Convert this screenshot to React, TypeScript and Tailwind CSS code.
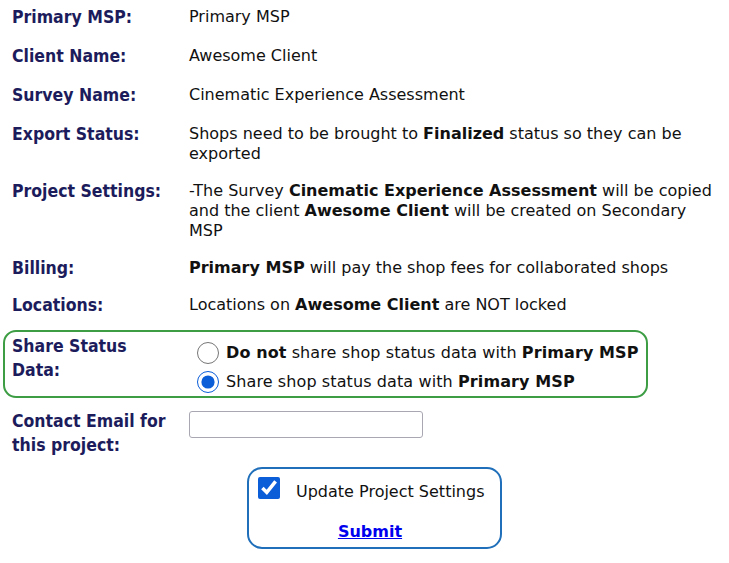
import React from 'react'

const labelCls =
  "font-['DejaVu_Sans_Condensed','Open_Sans',sans-serif] font-bold text-[17.5px] leading-6 text-[#1c1c5c]"

function Row({ label, children }: { label: string; children?: React.ReactNode }) {
  return (
    <div className="grid grid-cols-[177px_1fr] items-start">
      <div className={labelCls}>{label}</div>
      <div className="pt-[2px] text-[16px] leading-5 text-[#111]">{children}</div>
    </div>
  )
}

export default function App() {
  return (
    <div className="min-h-screen w-[729px] bg-white font-['DejaVu_Sans',Verdana,sans-serif] text-[#111]">
      <div className="flex flex-col gap-[15px] pl-3 pt-[5px]">
        <Row label="Primary MSP:">Primary MSP</Row>
        <Row label="Client Name:">Awesome Client</Row>
        <Row label="Survey Name:">Cinematic Experience Assessment</Row>
        <Row label="Export Status:">
          Shops need to be brought to <b>Finalized</b> status so they can be
          <br />
          exported
        </Row>
        <Row label="Project Settings:">
          -The Survey <b>Cinematic Experience Assessment</b> will be copied
          <br />
          and the client <b>Awesome Client</b> will be created on Secondary
          <br />
          MSP
        </Row>
        <Row label="Billing:">
          <b>Primary MSP</b> will pay the shop fees for collaborated shops
        </Row>
        <div className="-mt-[2px]">
          <Row label="Locations:">
            Locations on <b>Awesome Client</b> are NOT locked
          </Row>
        </div>
      </div>

      <div className="ml-[3px] mt-[13px] grid w-[645px] grid-cols-[177px_1fr] items-start rounded-[13px] border-2 border-[#3d9d44] pb-[2px] pt-[2px] pl-[7px]">
        <div className={labelCls}>
          Share Status
          <br />
          Data:
        </div>
        <div className="flex flex-col gap-[5px] pl-[8px] pt-[7px] text-[16px] leading-6 tracking-[0.1px]">
          <label className="flex items-center gap-[7px]">
            <input type="radio" name="share" className="m-0 h-[22px] w-[22px] accent-[#0b5dd8]" />
            <span>
              <b>Do not</b> share shop status data with <b>Primary MSP</b>
            </span>
          </label>
          <label className="flex items-center gap-[7px]">
            <input
              type="radio"
              name="share"
              defaultChecked
              className="m-0 h-[22px] w-[22px] accent-[#0b5dd8]"
            />
            <span>
              Share shop status data with <b>Primary MSP</b>
            </span>
          </label>
        </div>
      </div>

      <div className="mt-[11px] grid grid-cols-[177px_1fr] items-start pl-3">
        <div className={labelCls}>
          Contact Email for
          <br />
          this project:
        </div>
        <div className="pt-[2px]">
          <input
            type="text"
            className="h-[27px] w-[234px] rounded-[3px] border border-[#a9a7b2] bg-white px-1 text-[15px] outline-none"
          />
        </div>
      </div>

      <div className="ml-[247px] mt-[10px] flex h-[82px] w-[255px] flex-col rounded-[15px] border-2 border-[#1f6fba] pl-[9px] pt-[8px]">
        <label className="flex items-start">
          <input
            type="checkbox"
            defaultChecked
            className="m-0 h-[22px] w-[22px] accent-[#0b5dd8]"
          />
          <span className="ml-[16px] mt-[5px] text-[16px] leading-5">Update Project Settings</span>
        </label>
        <a
          href="#"
          className="mt-[20px] self-center pr-[18px] text-[16px] font-bold leading-5 text-[#0000ee] underline"
        >
          Submit
        </a>
      </div>
    </div>
  )
}
